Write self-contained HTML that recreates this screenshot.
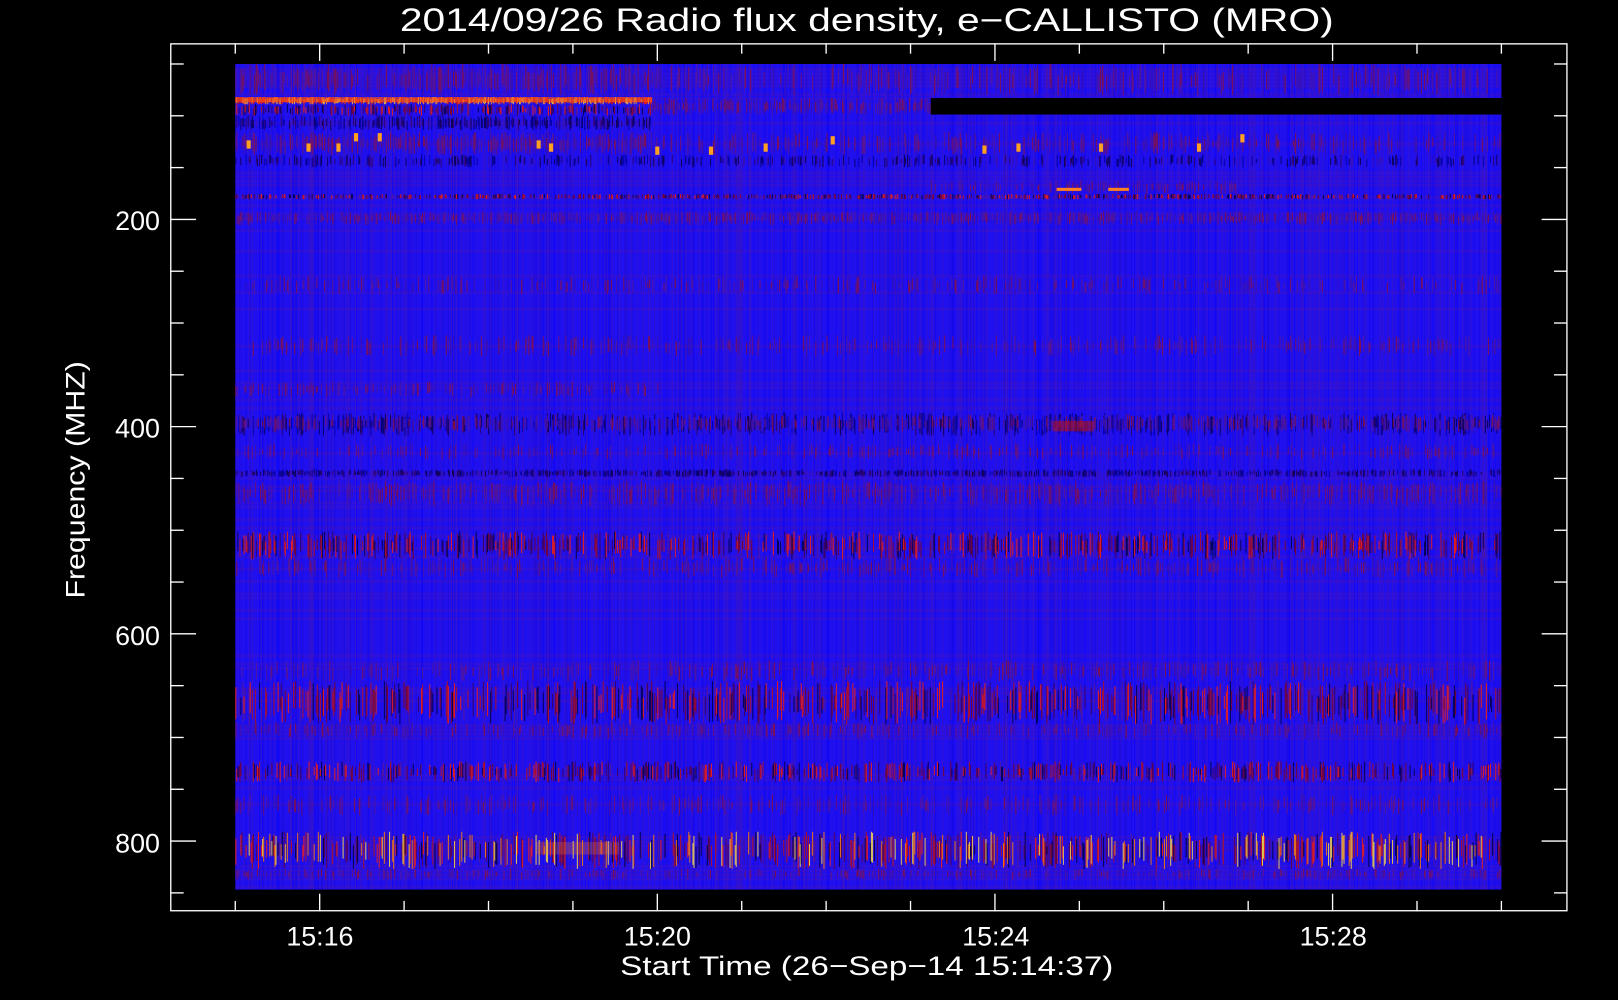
<!DOCTYPE html>
<html><head><meta charset="utf-8"><style>
html,body{margin:0;padding:0;background:#000;width:1618px;height:1000px;overflow:hidden}
svg{display:block}
text{font-family:"Liberation Sans","DejaVu Sans",sans-serif;fill:#fff}
</style></head><body>
<svg id="s" width="1618" height="1000" viewBox="0 0 1568 969" preserveAspectRatio="none" xmlns="http://www.w3.org/2000/svg">
<rect width="1568" height="969" fill="#000"/>
<rect x="228" y="62" width="1227" height="800" fill="#2010ee"/>
<g id="spec"></g>
<g stroke="#fff" stroke-width="1.3" fill="none">
<rect x="165.5" y="42.5" width="1353" height="840"/>
<g id="ticks"></g>
</g>
<text x="840" y="30" font-size="31" text-anchor="middle" textLength="905" lengthAdjust="spacingAndGlyphs">2014/09/26  Radio flux density, e−CALLISTO (MRO)</text>
<text x="155" y="223" font-size="26" text-anchor="end">200</text>
<text x="155" y="424" font-size="26" text-anchor="end">400</text>
<text x="155" y="625" font-size="26" text-anchor="end">600</text>
<text x="155" y="826" font-size="26" text-anchor="end">800</text>
<text x="310" y="916" font-size="26" text-anchor="middle">15:16</text>
<text x="637" y="916" font-size="26" text-anchor="middle">15:20</text>
<text x="965" y="916" font-size="26" text-anchor="middle">15:24</text>
<text x="1292" y="916" font-size="26" text-anchor="middle">15:28</text>
<text x="840" y="945" font-size="26" text-anchor="middle" textLength="478" lengthAdjust="spacingAndGlyphs">Start Time (26−Sep−14 15:14:37)</text>
<text transform="translate(82,465) rotate(-90)" font-size="26" text-anchor="middle" textLength="230" lengthAdjust="spacingAndGlyphs">Frequency (MHZ)</text>
</svg>
<script>
var g=document.getElementById("spec"),t=document.getElementById("ticks");
var seed=7;function r(){seed=(seed*16807)%2147483647;return seed/2147483647;}
var h="";
function rc(x,y,w,hh,c,o){h+='<rect x="'+x+'" y="'+y+'" width="'+w+'" height="'+hh+'" fill="'+c+'"'+(o!=null?' opacity="'+o+'"':'')+'/>';}
// background texture
for(var x=228;x<1455;x+=1){ if(r()<0.5){ var c=["#3a14c0","#0000ff","#4a18b0","#1808d0"][Math.floor(r()*4)]; rc(x,62,1,800,c,0.45);} }
// horizontal haze
for(var y=62;y<862;y+=4){ if(r()<0.35) rc(228,y,1227,3,"#6a1890",0.18); }
var P={pur:["#5a1890","#701070","#3a10b0","#8a1040","#4a14a0"],red:["#c01010","#800020","#ff2000","#400050","#000040","#5a1890"],hot:["#ff4000","#ffa020","#ff2000","#ffd040","#c01010"],dk:["#000060","#100040","#0000a0","#300060","#3a10b0"],yel:["#ffe040","#ff8000","#ff2000","#000030","#c01010","#600040","#5a1890","#3a10b0"]};
var B=[
[62,92,228,632,"pur",0.6],[62,92,632,1455,"pur",0.35],
[94,101,228,632,"hot",0.95],[101,112,228,632,"red",0.5],[112,126,228,632,"dk",0.6],
[95,111,632,902,"pur",0.6],
[128,150,228,632,"pur",0.6],[128,150,632,1455,"pur",0.3],[150,162,228,1455,"dk",0.35],
[175,188,902,1200,"pur",0.35],
[188,193,228,1455,"red",0.5],[205,218,228,1455,"pur",0.5],
[268,285,228,1455,"pur",0.25],[325,345,228,1455,"pur",0.25],[370,385,228,640,"pur",0.3],
[400,422,228,1455,"dk",0.45],[402,418,228,1455,"pur",0.4],
[430,445,228,1455,"pur",0.25],[455,462,228,1455,"dk",0.6],[466,490,228,1455,"pur",0.45],
[515,542,228,1455,"red",0.5],[540,560,228,1455,"pur",0.3],
[640,660,228,1455,"pur",0.3],[660,702,228,1455,"red",0.5],[700,715,228,1455,"pur",0.3],
[738,758,228,1455,"red",0.5],[770,790,228,1455,"pur",0.25],
[806,842,228,1455,"yel",0.6],[842,852,228,1455,"pur",0.3]
];
B.forEach(function(b){var p=P[b[4]];for(var x=b[2];x<b[3];x++){if(r()<b[5]){var y0=b[0]+Math.floor(r()*(b[1]-b[0])*0.4);var y1=b[1]-Math.floor(r()*(b[1]-b[0])*0.4);rc(x,y0,1,y1-y0,p[Math.floor(r()*p.length)],0.85);}}});
rc(902,95,553,16,"#000");
rc(228,94,404,5,"#ff5010",0.6);
[[239,140],[297,143],[326,143],[343,133],[366,133],[520,140],[532,143],[635,146],[687,146],[740,143],[805,136],[952,145],[985,143],[1065,143],[1202,134],[1160,143]].forEach(function(s){rc(s[0],s[1]-4,4,8,"#ffa020");});
rc(1024,182,24,3,"#ff8020");rc(1074,182,20,3,"#ff8020");rc(1020,408,40,10,"#c01010",0.5);
rc(520,816,80,12,"#ff8020",0.25);
g.innerHTML=h;
var k="";
function ln(a,b,c,d){k+='<line x1="'+a+'" y1="'+b+'" x2="'+c+'" y2="'+d+'"/>';}
for(var i=0;i<17;i++){var y=62+i*50.2;var mj=(i%4==3);var L=mj?25:13;ln(165,y,165+L,y);ln(1519,y,1519-L,y);}
for(var i=0;i<16;i++){var x=228+i*81.8;var mj=(i%4==1);var L=mj?17:10;ln(x,883,x,883-L);ln(x,42,x,42+L);}
t.innerHTML=k;
</script>
</body></html>
